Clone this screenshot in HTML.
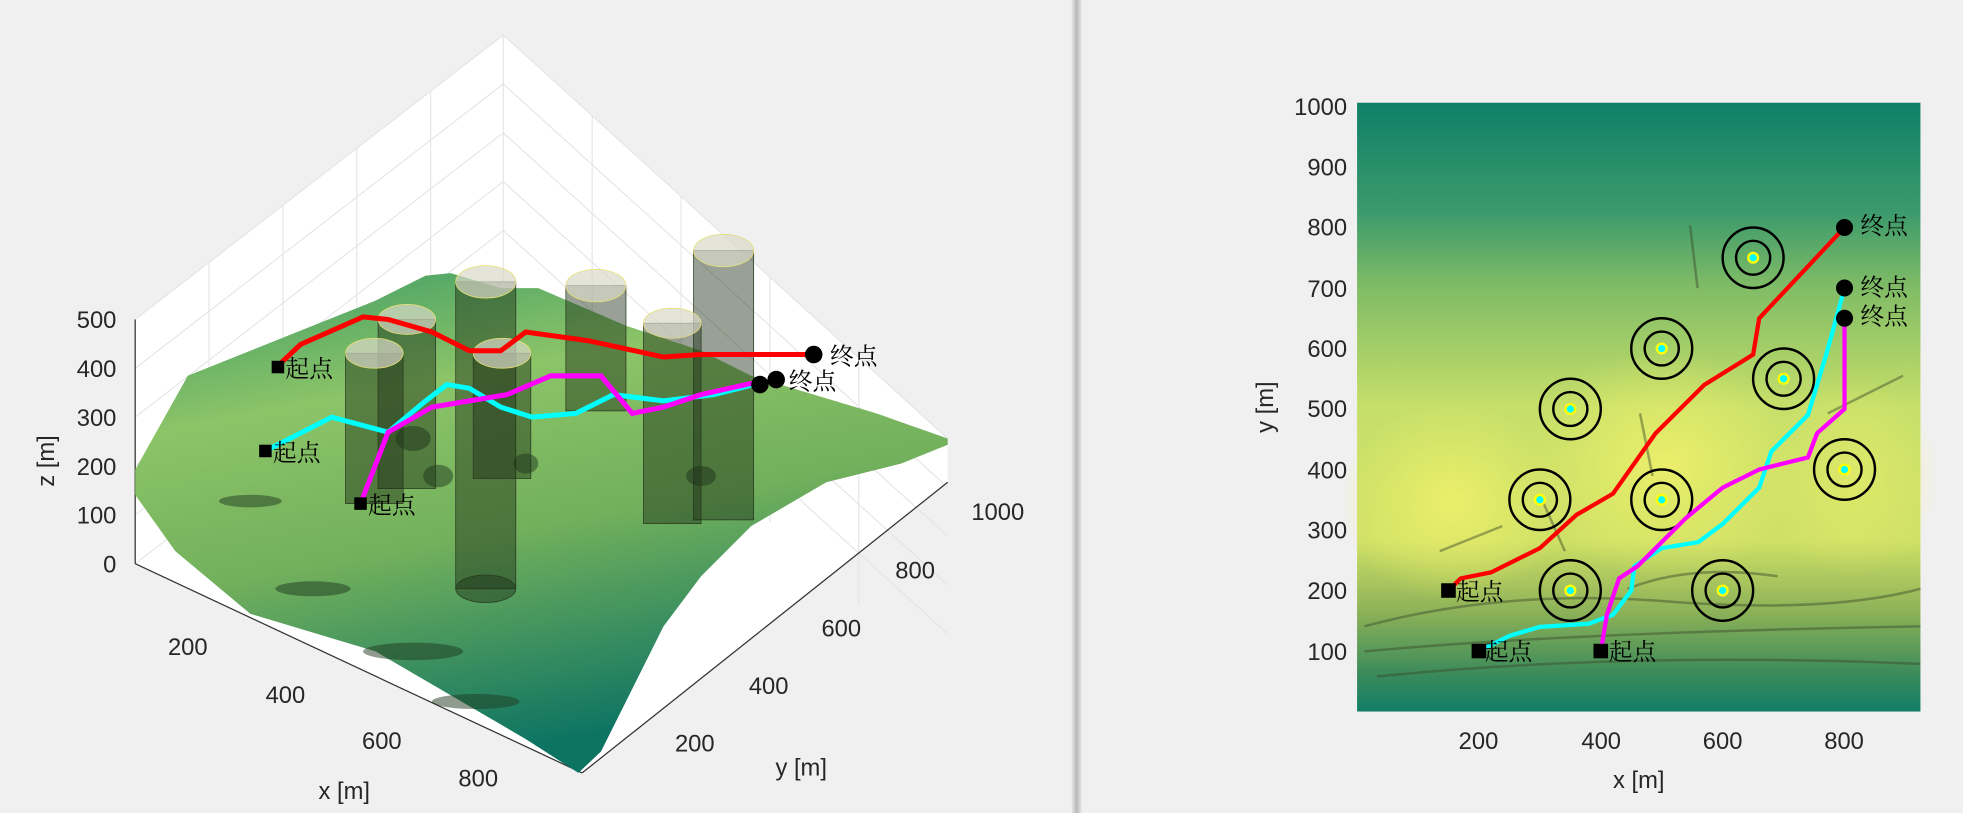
<!DOCTYPE html>
<html><head><meta charset="utf-8"><style>
html,body{margin:0;padding:0;background:#f0f0f0;overflow:hidden}
svg{display:block}
text{font-family:"Liberation Sans","Noto Sans CJK SC",sans-serif;fill:#262626}
.cj{font-family:"Noto Serif CJK SC","Noto Sans CJK SC",serif;fill:#000}
</style></head><body>
<svg width="1963" height="813" viewBox="0 0 1568 649" preserveAspectRatio="none" xmlns="http://www.w3.org/2000/svg">
<defs>
<linearGradient id="div" x1="0" x2="1"><stop offset="0" stop-color="#e6e6e6"/><stop offset="0.5" stop-color="#b8b8b8"/><stop offset="1" stop-color="#e8e8e8"/></linearGradient>
<linearGradient id="ter" x1="0" y1="0" x2="0" y2="1">
<stop offset="0" stop-color="#0f8068"/><stop offset="0.18" stop-color="#3c9a6c"/><stop offset="0.3" stop-color="#7fbb66"/><stop offset="0.5" stop-color="#c6df6a"/><stop offset="0.72" stop-color="#cfe066"/><stop offset="0.84" stop-color="#8ab058"/><stop offset="0.94" stop-color="#3a8a5a"/><stop offset="1" stop-color="#127e68"/></linearGradient>
<radialGradient id="yel" cx="0.5" cy="0.5" r="0.5"><stop offset="0" stop-color="#eef06a" stop-opacity="0.9"/><stop offset="1" stop-color="#eef06a" stop-opacity="0"/></radialGradient>
<linearGradient id="t3" x1="0" y1="0" x2="0.3" y2="1"><stop offset="0" stop-color="#3a9a66"/><stop offset="0.3" stop-color="#8cc468"/><stop offset="0.6" stop-color="#72b05c"/><stop offset="1" stop-color="#0e7462"/></linearGradient>
</defs>
<rect x="0" y="0" width="1568" height="649" fill="#f0f0f0"/>
<rect x="856" y="0" width="8" height="649" fill="url(#div)"/>

<polygon points="108,255 402,28 757,350 757,385 465,617 108,450" fill="#fff"/>
<g stroke="#e2e2e2" stroke-width="0.8" fill="none">
<line x1="108" y1="255" x2="402" y2="28"/><line x1="402" y1="28" x2="757" y2="350"/>
<line x1="402" y1="28" x2="402" y2="224"/>
<line x1="108" y1="294" x2="402" y2="67"/><line x1="108" y1="333" x2="402" y2="106"/><line x1="108" y1="372" x2="402" y2="145"/><line x1="108" y1="411" x2="402" y2="184"/><line x1="108" y1="450" x2="402" y2="224"/>
<line x1="402" y1="67" x2="757" y2="389"/><line x1="402" y1="106" x2="757" y2="428"/><line x1="402" y1="145" x2="757" y2="467"/><line x1="402" y1="184" x2="757" y2="506"/>
<line x1="167" y1="209" x2="167" y2="405"/><line x1="226" y1="164" x2="226" y2="360"/><line x1="285" y1="118" x2="285" y2="314"/><line x1="344" y1="73" x2="344" y2="269"/>
<line x1="473" y1="92" x2="473" y2="288"/><line x1="544" y1="157" x2="544" y2="353"/><line x1="615" y1="221" x2="615" y2="417"/><line x1="686" y1="286" x2="686" y2="482"/>
</g>
<line x1="108" y1="255" x2="108" y2="450" stroke="#333" stroke-width="1"/>
<line x1="108" y1="450" x2="465" y2="617" stroke="#333" stroke-width="1"/>
<line x1="465" y1="617" x2="757" y2="385" stroke="#333" stroke-width="1"/>
<polygon points="108,375 150,300 300,240 340,220 360,218 400,230 430,230 500,260 560,280 600,300 700,330 757,350 757,355 720,370 660,385 600,420 560,460 530,500 500,560 480,600 462,617 420,590 300,520 200,490 140,440 108,395" fill="url(#t3)"/>
<g fill="#1f3a20" opacity="0.5">
<ellipse cx="330" cy="350" rx="14" ry="10"/><ellipse cx="350" cy="380" rx="12" ry="9"/><ellipse cx="420" cy="370" rx="10" ry="8"/><ellipse cx="250" cy="470" rx="30" ry="6"/><ellipse cx="330" cy="520" rx="40" ry="7"/><ellipse cx="560" cy="380" rx="12" ry="8"/><ellipse cx="200" cy="400" rx="25" ry="5"/><ellipse cx="380" cy="560" rx="35" ry="6"/>
</g>
<g stroke="#2a3a20" stroke-width="0.6">
<g fill="#1d2e16" fill-opacity="0.45">
<rect x="364" y="225" width="48" height="245"/><ellipse cx="388" cy="470" rx="24" ry="11"/>
<rect x="452" y="228" width="48" height="100"/>
<rect x="554" y="200" width="48" height="215"/>
<rect x="514" y="258" width="46" height="160"/>
<rect x="302" y="255" width="46" height="135"/>
<rect x="276" y="282" width="46" height="120"/>
<rect x="378" y="282" width="46" height="100"/>
</g>
<g fill="#d8d8c8" fill-opacity="0.7" stroke="#e8e070">
<ellipse cx="388" cy="225" rx="24" ry="13"/><ellipse cx="476" cy="228" rx="24" ry="13"/><ellipse cx="578" cy="200" rx="24" ry="13"/><ellipse cx="537" cy="258" rx="23" ry="12"/><ellipse cx="325" cy="255" rx="23" ry="12"/><ellipse cx="299" cy="282" rx="23" ry="12"/><ellipse cx="401" cy="282" rx="23" ry="12"/>
</g>
</g>
<polyline points="222,292 240,275 290,253 310,255 345,265 375,280 400,280 420,265 470,272 530,285 560,283 650,283" fill="none" stroke="#f00" stroke-width="4"/>
<polyline points="212,360 265,333 310,345 340,320 357,307 375,310 400,325 425,333 460,330 490,315 530,320 570,315 610,305" fill="none" stroke="#0ff" stroke-width="4"/>
<polyline points="288,402 310,345 345,325 375,320 405,315 440,300 480,300 505,330 530,325 560,315 605,305" fill="none" stroke="#f0f" stroke-width="4"/>
<circle cx="650" cy="283" r="7" fill="#000"/><circle cx="620" cy="303" r="7" fill="#000"/><circle cx="607" cy="307" r="7" fill="#000"/>
<rect x="217" y="288" width="10" height="10" fill="#000"/><rect x="207" y="355" width="10" height="10" fill="#000"/><rect x="283" y="397" width="10" height="10" fill="#000"/>
<g font-size="19">
<text class="cj" x="228" y="301">起点</text><text class="cj" x="218" y="368">起点</text><text class="cj" x="294" y="410">起点</text>
<text class="cj" x="663" y="291">终点</text><text class="cj" x="630" y="311">终点</text>
</g>
<g font-size="19" text-anchor="end">
<text x="93" y="262">500</text><text x="93" y="301">400</text><text x="93" y="340">300</text><text x="93" y="379">200</text><text x="93" y="418">100</text><text x="93" y="457">0</text>
</g>
<g font-size="19" text-anchor="middle">
<text x="150" y="523">200</text><text x="228" y="561">400</text><text x="305" y="598">600</text><text x="382" y="628">800</text>
<text x="275" y="638">x [m]</text>
<text x="555" y="600">200</text><text x="614" y="554">400</text><text x="672" y="508">600</text><text x="731" y="462">800</text><text x="797" y="415">1000</text>
<text x="640" y="619">y [m]</text>
<text transform="translate(43,368) rotate(-90)">z [m]</text>
</g>

<rect x="1084" y="82" width="450" height="486" fill="url(#ter)"/>
<ellipse cx="1160" cy="400" rx="90" ry="80" fill="url(#yel)"/>
<ellipse cx="1330" cy="370" rx="110" ry="90" fill="url(#yel)"/>
<ellipse cx="1480" cy="380" rx="70" ry="80" fill="url(#yel)" opacity="0.6"/>
<g stroke="#3a4a2a" stroke-width="2" opacity="0.45" fill="none">
<path d="M1090 500 Q1200 470 1330 480 T1534 470"/><path d="M1090 520 Q1250 505 1534 500"/><path d="M1100 540 Q1300 520 1534 530"/><path d="M1150 440 L1200 420"/><path d="M1300 470 Q1350 450 1420 460"/>
<path d="M1230 395 L1250 440"/><path d="M1310 330 L1320 380"/><path d="M1350 180 L1356 230"/><path d="M1460 330 L1520 300"/>
</g>
<g transform="translate(1084,568) scale(0.4867,-0.483)">
<g fill="none" stroke="#000" stroke-width="4">
<circle cx="650" cy="750" r="50"/><circle cx="650" cy="750" r="28"/>
<circle cx="500" cy="600" r="50"/><circle cx="500" cy="600" r="28"/>
<circle cx="700" cy="550" r="50"/><circle cx="700" cy="550" r="28"/>
<circle cx="350" cy="500" r="50"/><circle cx="350" cy="500" r="28"/>
<circle cx="300" cy="350" r="50"/><circle cx="300" cy="350" r="28"/>
<circle cx="500" cy="350" r="50"/><circle cx="500" cy="350" r="28"/>
<circle cx="800" cy="400" r="50"/><circle cx="800" cy="400" r="28"/>
<circle cx="350" cy="200" r="50"/><circle cx="350" cy="200" r="28"/>
<circle cx="600" cy="200" r="50"/><circle cx="600" cy="200" r="28"/>
</g>
<g fill="#0ff" stroke="#ff0" stroke-width="4">
<circle cx="650" cy="750" r="8"/><circle cx="500" cy="600" r="8"/><circle cx="700" cy="550" r="8"/><circle cx="350" cy="500" r="8"/><circle cx="300" cy="350" r="8"/><circle cx="500" cy="350" r="8"/><circle cx="800" cy="400" r="8"/><circle cx="350" cy="200" r="8"/><circle cx="600" cy="200" r="8"/>
</g>
<polyline points="150,200 170,220 220,230 280,260 300,270 360,325 420,360 490,460 570,540 650,590 660,650 800,800" fill="none" stroke="#f00" stroke-width="7"/>
<polyline points="200,100 250,125 300,140 380,145 420,160 450,200 455,240 500,270 560,280 600,310 660,370 680,430 740,490 770,590 800,700" fill="none" stroke="#0ff" stroke-width="7"/>
<polyline points="400,100 410,160 430,220 460,240 540,320 600,370 660,400 740,420 755,460 800,500 800,650" fill="none" stroke="#f0f" stroke-width="7"/>
<circle cx="800" cy="800" r="14" fill="#000"/><circle cx="800" cy="700" r="14" fill="#000"/><circle cx="800" cy="650" r="14" fill="#000"/>
<rect x="138" y="188" width="24" height="24" fill="#000"/><rect x="188" y="88" width="24" height="24" fill="#000"/><rect x="388" y="88" width="24" height="24" fill="#000"/>
</g>
<g font-size="19">
<text class="cj" x="1163" y="479">起点</text><text class="cj" x="1186" y="527">起点</text><text class="cj" x="1285" y="527">起点</text>
<text class="cj" x="1486" y="187">终点</text><text class="cj" x="1486" y="236">终点</text><text class="cj" x="1486" y="259">终点</text>
</g>
<g font-size="19" text-anchor="end">
<text x="1076" y="92">1000</text><text x="1076" y="140">900</text><text x="1076" y="188">800</text><text x="1076" y="237">700</text><text x="1076" y="285">600</text><text x="1076" y="333">500</text><text x="1076" y="382">400</text><text x="1076" y="430">300</text><text x="1076" y="478">200</text><text x="1076" y="527">100</text>
</g>
<g font-size="19" text-anchor="middle">
<text x="1181" y="598">200</text><text x="1279" y="598">400</text><text x="1376" y="598">600</text><text x="1473" y="598">800</text>
<text x="1309" y="629">x [m]</text>
<text transform="translate(1017,325) rotate(-90)">y [m]</text>
</g>
</svg>
</body></html>
